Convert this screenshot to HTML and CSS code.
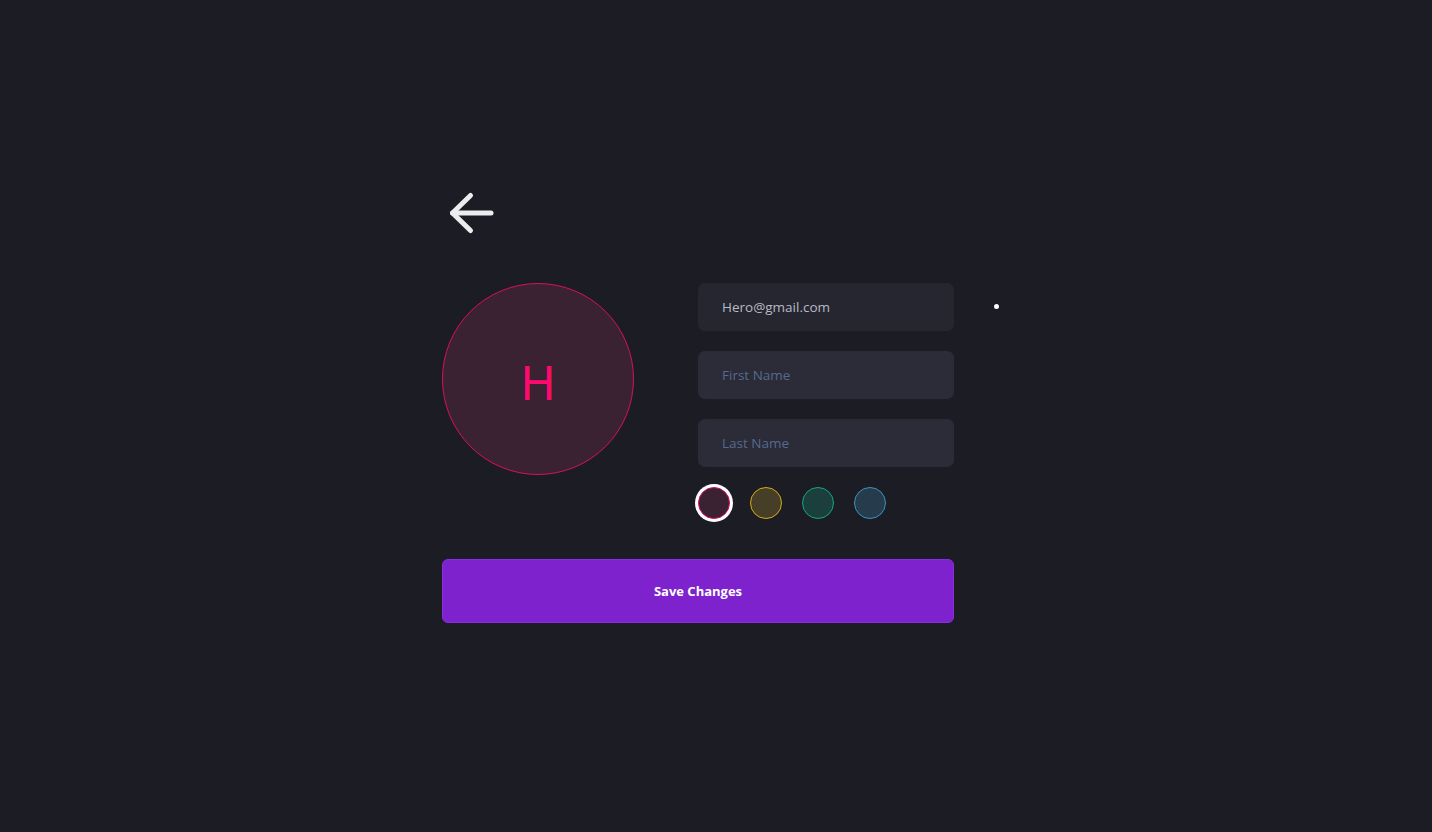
FILE: index.html
```html
<!DOCTYPE html>
<html lang="en">
<head>
<meta charset="utf-8">
<title>Edit Profile</title>
<link rel="stylesheet" href="styles.css">
</head>
<body>
<main class="page">
  <button class="back" aria-label="Back">
    <svg width="56" height="48" viewBox="0 0 56 48" fill="none" stroke="#ececee" stroke-width="5" stroke-linecap="round" stroke-linejoin="round">
      <path d="M10.5 24 H49"/>
      <path d="M28.5 6.5 L10.5 24 L28.5 41.5"/>
    </svg>
  </button>
  <section class="profile">
    <div class="avatar"><span>H</span></div>
    <div class="fields">
      <div class="input email">Hero@gmail.com</div>
      <div class="input placeholder">First Name</div>
      <div class="input placeholder">Last Name</div>
      <div class="swatches">
        <span class="swatch pink selected"></span>
        <span class="swatch yellow"></span>
        <span class="swatch green"></span>
        <span class="swatch blue"></span>
      </div>
    </div>
    <span class="dot"></span>
  </section>
  <button class="save">Save Changes</button>
</main>
</body>
</html>
```
FILE: styles.css
```css
* { box-sizing: border-box; }
html, body { margin: 0; height: 100%; }
body {
  background: #1c1d24;
  font-family: "Open Sans", "Noto Sans", sans-serif;
  color: #e6e6ea;
}
.page {
  width: 512px;
  margin-left: calc(50% - 274px);
  padding-top: 189px;
  display: flex;
  flex-direction: column;
}
.back {
  background: none;
  border: 0;
  padding: 0;
  width: 56px;
  height: 48px;
  display: block;
  cursor: pointer;
}
.back svg { display: block; }
.profile {
  margin-top: 46px;
  display: flex;
  align-items: flex-start;
  gap: 64px;
  position: relative;
}
.avatar {
  width: 192px;
  height: 192px;
  flex: none;
  border-radius: 50%;
  background: #3b2232;
  border: 1px solid #d80f63;
  display: flex;
  align-items: center;
  justify-content: center;
}
.avatar span {
  color: #ff0a6c;
  font-family: "Noto Sans", sans-serif;
  font-size: 48px;
  font-weight: 400;
  line-height: 1;
  margin-top: 6px;
}
.fields {
  width: 256px;
  flex: none;
  display: flex;
  flex-direction: column;
  gap: 20px;
}
.input {
  height: 48px;
  border-radius: 7px;
  background: #2b2c38;
  padding-left: 24px;
  display: flex;
  align-items: center;
  font-size: 13.5px;
}
.input.email {
  background: #262631;
  color: #b9b9c3;
}
.input.placeholder { color: #56698f; }
.swatches {
  display: flex;
  gap: 20px;
  height: 32px;
}
.swatch {
  width: 32px;
  height: 32px;
  border-radius: 50%;
  border: 1px solid;
}
.swatch.pink { background: #3b2232; border-color: #d80f63; }
.swatch.yellow { background: #473e27; border-color: #d6a91a; }
.swatch.green { background: #1b3f3c; border-color: #14a583; }
.swatch.blue { background: #263b4b; border-color: #3b93bd; }
.swatch.selected { box-shadow: 0 0 0 3px #ffffff; }
.dot {
  position: absolute;
  left: 552px;
  top: 21px;
  width: 5px;
  height: 5px;
  border-radius: 50%;
  background: #ffffff;
}
.save {
  margin-top: 40px;
  height: 64px;
  width: 512px;
  border: 1px solid #8c2be0;
  border-radius: 6px;
  background: #7e22ce;
  color: #ffffff;
  font-family: "Open Sans", "Noto Sans", sans-serif;
  font-size: 13px;
  font-weight: 700;
  cursor: pointer;
}
```
